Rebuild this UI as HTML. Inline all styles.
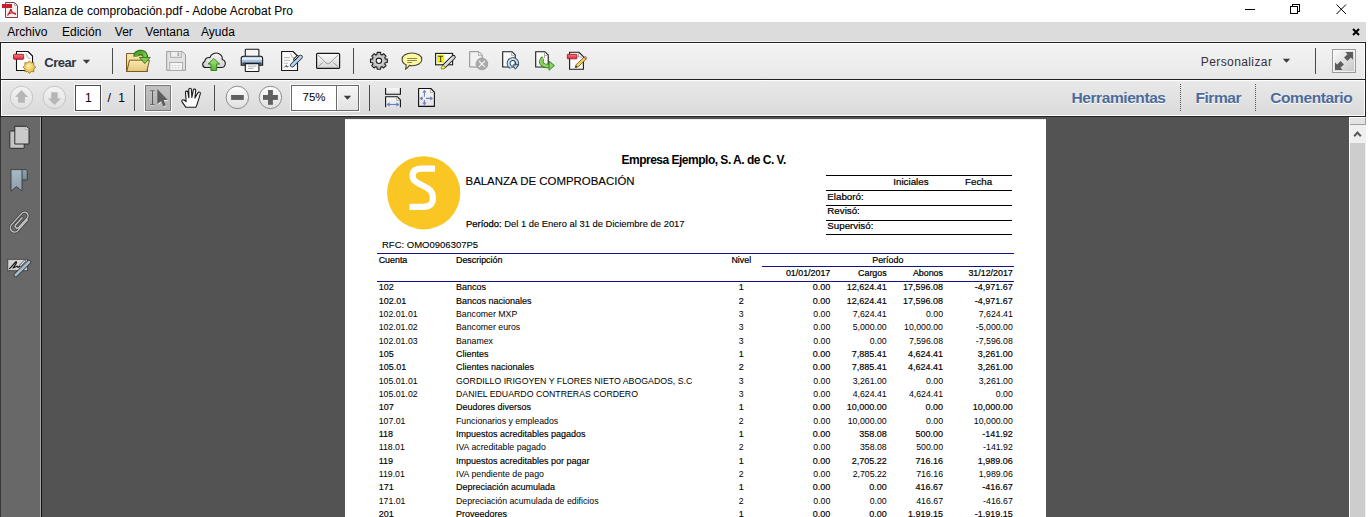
<!DOCTYPE html>
<html><head><meta charset="utf-8">
<style>
*{margin:0;padding:0;box-sizing:border-box}
html,body{width:1368px;height:517px;overflow:hidden;background:#fff;font-family:"Liberation Sans",sans-serif}
.a{position:absolute}
.t{position:absolute;white-space:nowrap;line-height:1}
svg{position:absolute;overflow:visible}
#title{left:0;top:0;width:1368px;height:22px;background:#fff}
#menu{left:0;top:22px;width:1366px;height:19px;background:#dcdcdc}
#tb1{left:0;top:42px;width:1366px;height:38px;border:1px solid #222;border-bottom:none;background:linear-gradient(#f3f3f3,#e8e8e8);box-shadow:inset 1px 1px 0 #fff, inset -1px -1px 0 #fff}
#tb2{left:0;top:79px;width:1366px;height:38px;border:1px solid #222;background:linear-gradient(#e9e9e9,#dadada);box-shadow:inset 1px 1px 0 #fff, inset -1px -1px 0 #fff}
#side{left:0;top:117px;width:42px;height:400px;background:#686868;border-right:1px solid #111;box-shadow:inset -1px 0 0 #a6a6a6, inset 1px 0 0 #383838}
#main{left:42px;top:117px;width:1307px;height:400px;background:#535353}
#sb{left:1349px;top:117px;width:17px;height:400px;background:#f0f0f0;border-left:1px solid #fff}
#page{left:345px;top:119px;width:701px;height:398px;background:#fff}
.ln{position:absolute}
.sep{position:absolute;width:1px;background:#4a4a4a}
.mi{position:absolute;font-size:12px;color:#000;line-height:1;white-space:nowrap;top:4px !important}
</style></head><body>
<!-- title bar -->
<div id="title" class="a">
  <svg style="left:0;top:0" width="22" height="22" viewBox="0 0 22 22">
    <path d="M5.5 2.5 H14.5 L17.5 5.5 V17.5 H5.5 Z" fill="#f4f0f0" stroke="#8a3a3a" stroke-width="1"/>
    <path d="M14.5 2.5 V5.5 H17.5" fill="none" stroke="#999" stroke-width="0.8"/>
    <rect x="2" y="4" width="10" height="4" fill="#c4202a"/>
    <path d="M11 9 C10 12 9 14 7.5 15.5 M11 9 C11.5 12 13 14 16 14 M8 14 C10 13 13 12.5 16 13.5" fill="none" stroke="#c4202a" stroke-width="1.3"/>
  </svg>
  <div class="t" style="left:23.5px;top:5px;font-size:12px;color:#000">Balanza de comprobación.pdf - Adobe Acrobat Pro</div>
  <div class="a" style="left:1245px;top:9px;width:10px;height:1px;background:#000"></div>
  <div class="a" style="left:1292px;top:4px;width:8px;height:8px;border:1px solid #000;background:#fff"></div>
  <div class="a" style="left:1290px;top:6px;width:8px;height:8px;border:1px solid #000;background:#fff"></div>
  <svg style="left:1336px;top:4px" width="11" height="11" viewBox="0 0 11 11"><path d="M0.5 0.5 L10 10 M10 0.5 L0.5 10" stroke="#000" stroke-width="1"/></svg>
</div>
<!-- menu bar -->
<div id="menu" class="a">
  <div class="mi" style="left:7.3px;top:5.3px">Archivo</div>
  <div class="mi" style="left:62px;top:5.3px">Edición</div>
  <div class="mi" style="left:114.8px;top:5.3px">Ver</div>
  <div class="mi" style="left:145.3px;top:5.3px">Ventana</div>
  <div class="mi" style="left:201px;top:5.3px">Ayuda</div>
  <svg style="left:1352px;top:6px" width="8" height="8" viewBox="0 0 8 8"><path d="M1 1 L7 7 M7 1 L1 7" stroke="#000" stroke-width="2"/></svg>
</div>
<div class="a" style="left:0;top:41px;width:1366px;height:1px;background:#f0f0f0"></div>
<!-- toolbar 1 -->
<div id="tb1" class="a"></div>
<!-- Crear icon -->
<svg style="left:0;top:42px" width="40" height="38" viewBox="0 42 40 38">
  <defs>
    <linearGradient id="gRed" x1="0" y1="0" x2="0" y2="1"><stop offset="0" stop-color="#ff7a80"/><stop offset="1" stop-color="#d8283a"/></linearGradient>
    <radialGradient id="gStar" cx="0.45" cy="0.4" r="0.6"><stop offset="0" stop-color="#fff2a8"/><stop offset="1" stop-color="#e0b030"/></radialGradient>
  </defs>
  <path d="M16.5 51.5 H28 L32.5 56 V70.5 H16.5 Z" fill="#fff" stroke="#111" stroke-width="1.1" stroke-linejoin="round"/>
  <path d="M25.8 53.3 C27 54.5 27 56.5 27.5 57.2 C28.5 58.3 30 58.3 30.5 58.5" fill="none" stroke="#999" stroke-width="0.9"/>
  <rect x="13.5" y="54.3" width="10.2" height="5" rx="0.8" fill="url(#gRed)" stroke="#a01824" stroke-width="0.9"/>
  <path d="M29.40 60.80 L31.20 62.86 L33.93 62.67 L33.74 65.40 L35.80 67.20 L33.74 69.00 L33.93 71.73 L31.20 71.54 L29.40 73.60 L27.60 71.54 L24.87 71.73 L25.06 69.00 L23.00 67.20 L25.06 65.40 L24.87 62.67 L27.60 62.86 Z" fill="url(#gStar)" stroke="#9a7020" stroke-width="0.8" stroke-linejoin="round"/>
</svg>
<div class="t" style="left:44.3px;top:56px;font-size:13px;letter-spacing:-0.5px;font-weight:700;color:#2e3542">Crear</div>
<svg style="left:82px;top:59px" width="9" height="6" viewBox="0 0 9 6"><path d="M0.8 0.8 H8.2 L4.5 4.8 Z" fill="#3c3c3c"/></svg>
<div class="sep" style="left:112px;top:48px;height:26px"></div>
<!-- open folder -->
<svg style="left:120px;top:44px" width="34" height="34" viewBox="120 44 34 34">
  <defs>
    <linearGradient id="gFold" x1="0" y1="0" x2="0" y2="1"><stop offset="0" stop-color="#fbe9b0"/><stop offset="1" stop-color="#e2c77e"/></linearGradient>
    <linearGradient id="gGreen" x1="0" y1="0" x2="1" y2="1"><stop offset="0" stop-color="#4a9a20"/><stop offset="1" stop-color="#8ed860"/></linearGradient>
  </defs>
  <path d="M126.5 53.5 H134 L135.5 55 H147.5 V71.5 H126.5 Z" fill="url(#gFold)" stroke="#7a5a20" stroke-width="1"/>
  <path d="M129.5 60.2 H149.4 L146.8 71.5 H126.8 Z" fill="url(#gFold)" stroke="#7a5a20" stroke-width="1" stroke-linejoin="round"/>
  <path d="M136 56.5 C135.6 53.5 138.6 52.2 141.4 52.4 C144.2 52.6 145.3 55 145.2 58" fill="none" stroke="#2f6e12" stroke-width="5.2"/>
  <path d="M136 56.5 C135.6 53.5 138.6 52.2 141.4 52.4 C144.2 52.6 145.3 55 145.2 58" fill="none" stroke="url(#gGreen)" stroke-width="3.4"/>
  <path d="M139.4 57.4 H150.2 L144.8 63.6 Z" fill="#80cc52" stroke="#2f6e12" stroke-width="0.9" stroke-linejoin="round"/>
</svg>
<!-- save (disabled) -->
<svg style="left:162px;top:46px" width="30" height="30" viewBox="162 46 30 30">
  <path d="M166.7 51.5 H182.3 L185.5 54.7 V70.3 H166.7 Z" fill="#e2e2e2" stroke="#9a9a9a" stroke-width="1"/>
  <rect x="170.6" y="51.5" width="10.6" height="5.8" fill="#eeeeee" stroke="#a6a6a6" stroke-width="0.9"/>
  <rect x="177.5" y="52.4" width="1.6" height="3.6" fill="#a6a6a6"/>
  <rect x="169.8" y="62.5" width="12.8" height="7.8" fill="#f6f6f6" stroke="#a6a6a6" stroke-width="0.9"/>
  <path d="M171.5 65.5 H181 M171.5 67.8 H181" stroke="#c8c8c8" stroke-width="0.8" stroke-dasharray="2 1"/>
</svg>
<!-- cloud upload -->
<svg style="left:199px;top:46px" width="30" height="30" viewBox="199 46 30 30">
  <defs><linearGradient id="gCloud" x1="0" y1="0" x2="0" y2="1"><stop offset="0" stop-color="#fafafa"/><stop offset="1" stop-color="#cfcfcf"/></linearGradient>
  <linearGradient id="gArr" x1="0" y1="0" x2="0" y2="1"><stop offset="0" stop-color="#a8e880"/><stop offset="1" stop-color="#58b030"/></linearGradient></defs>
  <path d="M205.5 67.5 C202 67.5 201.8 62.5 204.8 61.5 C204.8 58.5 207.5 57 209.8 57.8 C211 53.5 216 52 219 53.8 C221.5 55 222.5 57.5 222.2 59.5 C225.5 60 226 64 224.6 66 C224 67 223 67.5 222 67.5 Z" fill="url(#gCloud)" stroke="#1a1a1a" stroke-width="1.1" stroke-linejoin="round"/>
  <path d="M213.8 58.6 L219.6 64 H216.7 V70.5 H210.9 V64 H208 Z" fill="url(#gArr)" stroke="#2e7a14" stroke-width="0.9" stroke-linejoin="round"/>
</svg>
<!-- printer -->
<svg style="left:237px;top:46px" width="30" height="30" viewBox="237 46 30 30">
  <defs><linearGradient id="gPrn" x1="0" y1="0" x2="0" y2="1"><stop offset="0" stop-color="#9ab8d8"/><stop offset="0.3" stop-color="#f4f8fc"/><stop offset="0.45" stop-color="#a8c4e4"/><stop offset="0.75" stop-color="#98b4d4"/><stop offset="1" stop-color="#4a5a6a"/></linearGradient></defs>
  <rect x="245.3" y="49.3" width="13.6" height="9" rx="0.8" fill="#f4f4f4" stroke="#1a1a1a" stroke-width="1.1"/>
  <path d="M243.5 56.3 H260.7 C262 56.3 262.6 57.2 262.6 58.5 V65.2 H241.2 V58.5 C241.2 57.2 242 56.3 243.5 56.3 Z" fill="url(#gPrn)" stroke="#1a1a1a" stroke-width="1.1"/>
  <rect x="242.5" y="62.5" width="19" height="1.6" fill="#3a4a5a"/>
  <rect x="245.3" y="63.6" width="13.6" height="7.9" rx="0.6" fill="#fafafa" stroke="#1a1a1a" stroke-width="1.1"/>
  <path d="M248 66.2 H256.5 M248 68.4 H253.5" stroke="#999" stroke-width="0.8"/>
</svg>
<!-- edit doc -->
<svg style="left:277px;top:46px" width="30" height="30" viewBox="277 46 30 30">
  <path d="M281.6 51.5 H293 L297.5 56 V70.5 H281.6 Z" fill="#fafafa" stroke="#1a1a1a" stroke-width="1.1" stroke-linejoin="round"/>
  <path d="M290.7 53.3 C291.5 54.5 291.3 56 292 56.8 C293 57.6 294.5 57.5 295.5 57.5" fill="none" stroke="#999" stroke-width="0.8"/>
  <path d="M284 57.5 H290 M284 60.3 H290 M284 63.2 H288" stroke="#aaa" stroke-width="0.8"/>
  <path d="M284.3 67.5 L286.3 65.3 L286.8 67 L288.5 66.4" fill="none" stroke="#222" stroke-width="0.8"/>
  <path d="M292.2 65.2 L300.6 57" stroke="#1a2a3a" stroke-width="4.4" stroke-linecap="round"/><path d="M292.2 65.2 L300.6 57" stroke="#b8d4ee" stroke-width="2.8" stroke-linecap="round"/>
  <path d="M294.2 59.6 L297.6 56.2" stroke="#1a1a1a" stroke-width="2.4" stroke-linecap="round"/><path d="M294.2 59.6 L297.6 56.2" stroke="#fff" stroke-width="1" stroke-linecap="round"/>
</svg>
<!-- email -->
<svg style="left:313px;top:46px" width="30" height="30" viewBox="313 46 30 30">
  <defs><linearGradient id="gMail" x1="0" y1="0" x2="0" y2="1"><stop offset="0" stop-color="#fbfbfb"/><stop offset="1" stop-color="#d6d6d6"/></linearGradient></defs>
  <rect x="316.6" y="53.4" width="23" height="15" rx="1" fill="url(#gMail)" stroke="#1a1a1a" stroke-width="1.2"/>
  <path d="M318.3 55.2 L326 63 Q328 64.8 330 63 L337.9 55.2 M318.3 66.6 L322.8 62.3 M333.3 62.3 L337.9 66.6" fill="none" stroke="#8a8a8a" stroke-width="0.8"/>
</svg>
<div class="sep" style="left:353px;top:48px;height:26px"></div>
<!-- gear -->
<svg style="left:366px;top:46px" width="30" height="30" viewBox="366 46 30 30">
  <defs><radialGradient id="gGear" cx="0.5" cy="0.5" r="0.5"><stop offset="0" stop-color="#e8e8e8"/><stop offset="1" stop-color="#b0b0b0"/></radialGradient></defs>
  <g transform="translate(378.9 60.8)">
    <path id="gearp" d="M-1.95 -6.31 L-1.71 -8.43 L1.71 -8.43 L1.95 -6.31 L3.08 -5.84 L4.75 -7.17 L7.17 -4.75 L5.84 -3.08 L6.31 -1.95 L8.43 -1.71 L8.43 1.71 L6.31 1.95 L5.84 3.08 L7.17 4.75 L4.75 7.17 L3.08 5.84 L1.95 6.31 L1.71 8.43 L-1.71 8.43 L-1.95 6.31 L-3.08 5.84 L-4.75 7.17 L-7.17 4.75 L-5.84 3.08 L-6.31 1.95 L-8.43 1.71 L-8.43 -1.71 L-6.31 -1.95 L-5.84 -3.08 L-7.17 -4.75 L-4.75 -7.17 L-3.08 -5.84 Z" fill="url(#gGear)" stroke="#1a1a1a" stroke-width="1.1" stroke-linejoin="round"/>
    <circle r="2.7" fill="#fafafa" stroke="#1a1a1a" stroke-width="1.1"/>
  </g>
</svg>
<!-- bubble -->
<svg style="left:398px;top:46px" width="30" height="30" viewBox="398 46 30 30">
  <path d="M411.9 53 C417.5 53 421.8 55.6 421.8 59.4 C421.8 63.2 417.5 65.7 412 65.7 C411 65.7 410 65.6 409.2 65.4 C408.3 67 407 68.5 405.5 69.2 C405.9 68 406.3 66.5 406.2 64.8 C403.6 63.6 402.1 61.6 402.1 59.4 C402.1 55.6 406.4 53 411.9 53 Z" fill="#fcf8a4" stroke="#4a4236" stroke-width="1.1" stroke-linejoin="round"/>
  <path d="M407.2 58.5 H416.9 M407.2 60.5 H416.9 M407.2 62.5 H412" stroke="#8c8444" stroke-width="1"/>
</svg>
<!-- T pencil -->
<svg style="left:430px;top:46px" width="30" height="30" viewBox="430 46 30 30">
  <rect x="435.6" y="53.4" width="17" height="11.4" fill="#fafafa" stroke="#1a1a1a" stroke-width="1.1"/>
  <rect x="437" y="54.7" width="7.2" height="8.1" fill="#f4f000"/>
  <path d="M438.2 56.3 H443 M440.6 56.3 V61.5 M439.6 61.5 H441.6" fill="none" stroke="#3a3010" stroke-width="0.9"/>
  <path d="M444.2 66.2 L453.4 57.2" stroke="#1a1a1a" stroke-width="4.6" stroke-linecap="round"/><path d="M444.2 66.2 L453.4 57.2" stroke="#d4d4d4" stroke-width="2.8" stroke-linecap="round"/><path d="M445.5 64.2 L452 57.8" stroke="#f4f4f4" stroke-width="0.9"/>
  <path d="M441.5 69 C440.5 67.5 442 65.5 443.5 65.7 C445 66 445.5 67.5 444.5 68.3 C443.8 68.9 442.5 69.2 441.5 69 Z" fill="#f0ec90" stroke="#8a8000" stroke-width="0.9"/>
</svg>
<!-- doc X (disabled) -->
<svg style="left:465px;top:46px" width="30" height="30" viewBox="465 46 30 30">
  <path d="M469.7 51.7 H479 L482.2 54.9 V67 H469.7 Z" fill="#f2f2f2" stroke="#8c8c8c" stroke-width="1"/>
  <path d="M478.5 52.5 V55.4 H481.5" fill="none" stroke="#9a9a9a" stroke-width="0.8"/>
  <circle cx="481.9" cy="63.9" r="5.9" fill="#aaaaaa" stroke="#9a9a9a" stroke-width="0.8"/>
  <path d="M479 61 L484.8 66.8 M484.8 61 L479 66.8" stroke="#f4f4f4" stroke-width="1.1"/>
</svg>
<!-- doc refresh -->
<svg style="left:498px;top:46px" width="30" height="30" viewBox="498 46 30 30">
  <path d="M502.7 51.7 H512 L515.2 54.9 V67 H502.7 Z" fill="#fafafa" stroke="#1a1a1a" stroke-width="1.1"/>
  <path d="M511.5 52.5 V55.4 H514.5" fill="none" stroke="#999" stroke-width="0.8"/>
  <path d="M511 67.1 C508.6 66.1 508 63 509.3 60.9 C510.8 58.6 514.4 58.4 516.2 60.6 C517.6 62.4 517.3 65 515.8 66.2" fill="none" stroke="#24374a" stroke-width="3.8"/>
  <path d="M511 67.1 C508.6 66.1 508 63 509.3 60.9 C510.8 58.6 514.4 58.4 516.2 60.6 C517.6 62.4 517.3 65 515.8 66.2" fill="none" stroke="#c2e0f6" stroke-width="2.1"/>
  <path d="M512.8 65 L518.6 64.6 L515.4 69.2 Z" fill="#c2e0f6" stroke="#24374a" stroke-width="0.9" stroke-linejoin="round"/>
</svg>
<!-- doc green arrow -->
<svg style="left:531px;top:46px" width="30" height="30" viewBox="531 46 30 30">
  <path d="M535.7 51.7 H545 L548.2 54.9 V67 H535.7 Z" fill="#fafafa" stroke="#1a1a1a" stroke-width="1.1"/>
  <path d="M544.5 52.5 V58 M544.5 55.4 H547.5" fill="none" stroke="#999" stroke-width="0.8"/>
  <path d="M543.2 58.2 C540.6 59.8 540.6 63.2 543 64.8 C545 66 547.2 66.2 549.5 65.8" fill="none" stroke="#2e7416" stroke-width="4.4" stroke-linecap="butt"/>
  <path d="M543.2 58.2 C540.6 59.8 540.6 63.2 543 64.8 C545 66 547.2 66.2 549.5 65.8" fill="none" stroke="#8cd464" stroke-width="2.8"/>
  <path d="M549 61 L554.4 65.6 L549 70.2 Z" fill="#8cd464" stroke="#2e7416" stroke-width="0.9" stroke-linejoin="round"/>
</svg>
<!-- doc red pencil -->
<svg style="left:563px;top:46px" width="30" height="30" viewBox="563 46 30 30">
  <path d="M569.6 52.3 H579 L583.4 56.7 V69.3 H569.6 Z" fill="#fafafa" stroke="#1a1a1a" stroke-width="1.1"/>
  <path d="M578.5 53.3 V57 H582" fill="none" stroke="#999" stroke-width="0.8"/>
  <rect x="567.3" y="54.3" width="9.6" height="4.5" rx="0.6" fill="url(#gRed)" stroke="#a01824" stroke-width="0.9"/>
  <path d="M575.3 67.6 L576.2 64.6 L584 57.2 L586 59.2 L578.3 66.7 Z" fill="#f2d060" stroke="#7a5a18" stroke-width="0.9" stroke-linejoin="round"/>
  <path d="M584 57.2 C584.8 56.3 586.3 56.6 586.6 57.5 C586.9 58.2 586.6 58.7 586 59.2 Z" fill="#f0a0a8" stroke="#a05050" stroke-width="0.8"/>
  <path d="M575.3 67.6 L575.9 65.6 L577.3 67 Z" fill="#111"/>
</svg>
<!-- Personalizar -->
<div class="t" style="left:1200.8px;top:56px;font-size:12px;letter-spacing:0.4px;color:#352f3c">Personalizar</div>
<svg style="left:1282px;top:58px" width="9" height="6" viewBox="0 0 9 6"><path d="M0.8 0.8 H8.2 L4.5 4.8 Z" fill="#3c3c3c"/></svg>
<div class="sep" style="left:1315px;top:48px;height:26px"></div>
<!-- expand -->
<svg style="left:1328px;top:45px" width="32" height="32" viewBox="1328 45 32 32">
  <defs><linearGradient id="gExp" x1="0" y1="0" x2="1" y2="1"><stop offset="0" stop-color="#fdfdfd"/><stop offset="1" stop-color="#c4c4c4"/></linearGradient></defs>
  <rect x="1332.5" y="49.5" width="23" height="23" fill="url(#gExp)" stroke="#9a9a9a" stroke-width="1"/>
  <rect x="1333.5" y="50.5" width="21" height="21" fill="none" stroke="#fff" stroke-width="0.8" opacity="0.8"/>
  <path d="M1353 52 H1345.3 L1347.5 54.2 L1344.1 57.6 L1347.4 60.9 L1350.8 57.5 L1353 59.7 Z" fill="#5c5c5c"/>
  <path d="M1335 70 H1342.7 L1340.5 67.8 L1343.9 64.4 L1340.6 61.1 L1337.2 64.5 L1335 62.3 Z" fill="#5c5c5c"/>
</svg>

<!-- toolbar 2 -->
<div id="tb2" class="a"></div>
<!-- up/down circles (disabled) -->
<svg style="left:0;top:80px" width="70" height="36" viewBox="0 80 70 36">
  <defs><linearGradient id="gCirc" x1="0" y1="0" x2="0" y2="1"><stop offset="0" stop-color="#f4f4f4"/><stop offset="1" stop-color="#e0e0e0"/></linearGradient>
  <linearGradient id="gCirc2" x1="0" y1="0" x2="0" y2="1"><stop offset="0" stop-color="#ffffff"/><stop offset="1" stop-color="#dedede"/></linearGradient></defs>
  <circle cx="21.5" cy="97.45" r="11.2" fill="url(#gCirc)" stroke="#c4c4c4" stroke-width="1"/>
  <path d="M15 96.9 L21.5 89.9 L28 96.9 H24.9 V102.7 H18.1 V96.9 Z" fill="#b6b6b6"/>
  <circle cx="54.4" cy="97.45" r="11.2" fill="url(#gCirc)" stroke="#c4c4c4" stroke-width="1"/>
  <path d="M51.2 92.2 H57.7 V98.4 H61.1 L54.4 104.9 L48.1 98.4 H51.2 Z" fill="#b6b6b6"/>
</svg>
<!-- page number box -->
<div class="a" style="left:74px;top:84px;width:28px;height:28px;background:#fff;border:1px solid #fafafa"></div>
<div class="a" style="left:75px;top:85px;width:26px;height:26px;background:#fff;border:1px solid #4a4a4a"></div>
<div class="t" style="left:85px;top:92px;font-size:12px;color:#000">1</div>
<div class="t" style="left:107.5px;top:92px;font-size:12.5px;color:#000">/</div><div class="t" style="left:118.2px;top:92px;font-size:12px;color:#000">1</div>
<div class="sep" style="left:134px;top:85px;height:26px"></div>
<!-- select tool pressed -->
<div class="a" style="left:144px;top:84px;width:28px;height:28px;border:1px solid #fbfbfb"></div>
<div class="a" style="left:145px;top:85px;width:26px;height:26px;border:1px solid #7a7a7a;background:linear-gradient(#c2c2c2,#b2b2b2)"></div>
<svg style="left:140px;top:82px" width="34" height="32" viewBox="140 82 34 32">
  <path d="M150.2 90.9 H154.8 M152.5 90.9 V104.7 M150.2 104.7 H154.8" fill="none" stroke="#fff" stroke-width="1" transform="translate(0 0.9)" opacity="0.8"/>
  <path d="M150.2 90.9 H154.8 M152.5 90.9 V104.7 M150.2 104.7 H154.8" fill="none" stroke="#5a5a5a" stroke-width="1"/>
  <path d="M157.3 89.1 L167.8 100 H163.6 L165.8 105.2 L163.3 106.4 L161.1 101.2 L157.3 104 Z" fill="#fff" opacity="0.7" transform="translate(0.5 1)"/>
  <path d="M157.3 89.1 L167.8 100 H163.6 L165.8 105.2 L163.3 106.4 L161.1 101.2 L157.3 104 Z" fill="#5c5c5c"/>
</svg>
<!-- hand -->
<svg style="left:178px;top:84px" width="26" height="26" viewBox="178 84 26 26">
  <path transform="translate(191.2 97.6) scale(1.1 1.05) translate(-190.4 -97.2)" d="M185.5 106.3 L182.2 101.5 C181.3 100.2 182.5 98.6 184 99.5 L185.8 101 L185.2 92.2 C185.1 90.8 187.2 90.6 187.4 92 L188.3 97.4 L188.2 89.5 C188.2 88 190.5 88 190.6 89.5 L191 97 L192.3 90 C192.6 88.6 194.7 88.9 194.5 90.4 L193.8 97.6 L196.5 92.6 C197.2 91.3 199.2 92 198.7 93.4 L196.7 100.5 C196 103 195.5 104.6 194.6 106.3 Z" fill="#fcfcfc" stroke="#1a1a1a" stroke-width="1" stroke-linejoin="round"/>
</svg>
<div class="sep" style="left:214px;top:85px;height:26px"></div>
<!-- zoom out/in -->
<svg style="left:220px;top:82px" width="66" height="32" viewBox="220 82 66 32">
  <circle cx="237.35" cy="97.45" r="11.2" fill="url(#gCirc2)" stroke="#8c8c8c" stroke-width="1"/>
  <rect x="231.1" y="95" width="12.7" height="4.9" fill="#606060"/>
  <circle cx="270.45" cy="97.45" r="11.2" fill="url(#gCirc2)" stroke="#8c8c8c" stroke-width="1"/>
  <rect x="263" y="95" width="14.9" height="4.9" fill="#606060"/>
  <rect x="268" y="90" width="4.9" height="14.8" fill="#606060"/>
</svg>
<!-- zoom combo -->
<div class="a" style="left:290px;top:84px;width:70px;height:28px;border:1px solid #fafafa"></div>
<div class="a" style="left:291px;top:85px;width:68px;height:26px;border:1px solid #6a6a6a;background:#fff"></div>
<div class="a" style="left:336px;top:86px;width:1px;height:24px;background:#6a6a6a"></div>
<div class="a" style="left:337px;top:86px;width:21px;height:24px;background:linear-gradient(#f6f6f6,#e2e2e2);box-shadow:inset 1px 1px 0 #fff"></div>
<div class="t" style="left:302.5px;top:92px;font-size:11.5px;color:#000">75%</div>
<svg style="left:343px;top:95px" width="9" height="6" viewBox="0 0 9 6"><path d="M0.8 0.8 H8.2 L4.5 4.8 Z" fill="#3c3c3c"/></svg>
<div class="sep" style="left:369px;top:85px;height:26px"></div>
<!-- fit width / fit page -->
<svg style="left:378px;top:82px" width="64" height="32" viewBox="378 82 64 32">
  <defs><linearGradient id="gPg" x1="0" y1="0" x2="0" y2="1"><stop offset="0" stop-color="#f8f8f8"/><stop offset="1" stop-color="#e4e4e4"/></linearGradient></defs>
  <path d="M385.6 88 V94.3 H400.4 V88" fill="url(#gPg)" stroke="#111" stroke-width="1.1"/>
  <path d="M385.6 107.3 V96.7 H397.2 L400.4 99.9 V107.3" fill="url(#gPg)" stroke="#111" stroke-width="1.1" stroke-linejoin="round"/>
  <path d="M396.7 97.3 V100.4 H399.8" fill="none" stroke="#999" stroke-width="0.8"/>
  <path d="M387.5 104.5 H398.5" stroke="#6a82c0" stroke-width="1.2"/>
  <path d="M386.6 104.5 L389.6 102.2 V106.8 Z M399.4 104.5 L396.4 102.2 V106.8 Z" fill="#6a82c0"/>
  <path d="M418.6 88.5 H430.8 L434.4 92.1 V106.4 H418.6 Z" fill="url(#gPg)" stroke="#111" stroke-width="1.1" stroke-linejoin="round"/>
  <path d="M430.3 89.2 V92.6 H433.7" fill="none" stroke="#999" stroke-width="0.8"/>
  <path d="M424.4 91.5 V96.8 M424.4 100 V104.2 M420.8 98.4 H423 M425.9 98.4 H431.3" stroke="#6a82c0" stroke-width="1.1"/>
  <path d="M424.4 89.8 L422.2 92.6 H426.6 Z M424.4 105.4 L422.2 102.6 H426.6 Z M419.5 98.4 L422.3 96.2 V100.6 Z M433.1 98.4 L430.3 96.2 V100.6 Z" fill="#6a82c0"/>
</svg>
<!-- right tabs -->
<div class="t" style="left:1071.5px;top:90px;font-size:15.5px;letter-spacing:-0.42px;font-weight:700;color:#4b6b9b;text-shadow:0 1px 0 #fff">Herramientas</div>
<div class="a" style="left:1180px;top:84px;width:1px;height:27px;background:repeating-linear-gradient(#555 0 1px,transparent 1px 2px)"></div>
<div class="t" style="left:1195.5px;top:90px;font-size:15.5px;letter-spacing:-0.45px;font-weight:700;color:#4b6b9b;text-shadow:0 1px 0 #fff">Firmar</div>
<div class="a" style="left:1255px;top:84px;width:1px;height:27px;background:repeating-linear-gradient(#555 0 1px,transparent 1px 2px)"></div>
<div class="t" style="left:1270.3px;top:90px;font-size:15.5px;letter-spacing:-0.42px;font-weight:700;color:#4b6b9b;text-shadow:0 1px 0 #fff">Comentario</div>

<!-- left side panel -->
<div id="side" class="a"></div>
<svg style="left:0;top:117px" width="42" height="170" viewBox="0 117 42 170">
  <defs>
    <linearGradient id="gBm" x1="0" y1="0" x2="0" y2="1"><stop offset="0" stop-color="#a9bac4"/><stop offset="1" stop-color="#8a9eac"/></linearGradient>
    <linearGradient id="gBm2" x1="0" y1="0" x2="0" y2="1"><stop offset="0" stop-color="#90a8b8"/><stop offset="1" stop-color="#6e8898"/></linearGradient>
  </defs>
  <!-- pages -->
  <rect x="9.8" y="131" width="14.4" height="17.3" rx="0.8" fill="#c4c4c4" stroke="#2c2c2c" stroke-width="1"/>
  <path d="M14.8 126.3 H26.5 L29 128.8 V144 H14.8 Z" fill="#cacaca" stroke="#2c2c2c" stroke-width="1" stroke-linejoin="round"/>
  <path d="M25.8 126.8 V129.5 H28.6" fill="#eee" stroke="#999" stroke-width="0.7"/>
  <!-- bookmark -->
  <path d="M21.5 169.6 H25.2 C26.6 169.6 27.3 170.4 27.3 171.6 V180 H21.5 Z" fill="url(#gBm2)" stroke="#3a3a3a" stroke-width="0.9"/>
  <path d="M11 169.6 H22 V191.2 L16.5 186.6 L11 191.2 Z" fill="url(#gBm)" stroke="#3a3a3a" stroke-width="0.9" stroke-linejoin="round"/>
  <!-- paperclip -->
  <g transform="translate(19.6 222.2) rotate(-48)">
  <path d="M 7 4.3 H -7.5 A 4.3 4.3 0 0 1 -7.5 -4.3 H 8 A 3.6 3.6 0 0 1 8 2.9 H -4.5 A 2 2 0 0 1 -4.5 -1.1 H 5" fill="none" stroke="#333" stroke-width="2.8" stroke-linecap="round" stroke-linejoin="round" opacity="0.8"/>
  <path d="M 7 4.3 H -7.5 A 4.3 4.3 0 0 1 -7.5 -4.3 H 8 A 3.6 3.6 0 0 1 8 2.9 H -4.5 A 2 2 0 0 1 -4.5 -1.1 H 5" fill="none" stroke="#c2c2c2" stroke-width="1.4" stroke-linecap="round" stroke-linejoin="round"/>
  </g>
  <!-- signature -->
  <rect x="7.8" y="259.3" width="19.6" height="11.4" fill="#d2d2d2" stroke="#3a3a3a" stroke-width="0.8"/>
  <path d="M9.6 268.6 C11.5 267 13.5 264.5 15.2 262.5 C16.5 261 17 262 16 263.8 C15 265.5 13.5 267.2 13.3 267.8 C14.5 267.3 15.8 266.6 17 266.2 C17.5 266.2 17.3 267.3 18 267.2 C18.6 267.1 19.2 266.7 19.8 266.6" fill="none" stroke="#111" stroke-width="1.2" stroke-linecap="round"/>
  <path d="M20.6 265.3 L24.8 261" stroke="#3a3a3a" stroke-width="2.4" stroke-linecap="round"/>
  <path d="M20.6 265.3 L24.8 261" stroke="#f0f0f0" stroke-width="1.1" stroke-linecap="round"/>
  <path d="M15.8 275 L29 262" stroke="#2e2e2e" stroke-width="4.4" stroke-linecap="round"/>
  <path d="M15.8 275 L29 262" stroke="#a4bccc" stroke-width="2.8" stroke-linecap="round"/>
</svg>

<div id="main" class="a"></div>
<div id="page" class="a"></div><div class="a" style="left:345px;top:119px;width:701px;height:1px;background:#ececec"></div>
<svg style="left:380px;top:150px" width="86" height="86" viewBox="380 150 86 86">
  <circle cx="423.7" cy="192.8" r="36.6" fill="#f9c624"/>
  <path d="M435 168.6 L421.5 168.6 C415 168.6 412.6 171.5 412.6 175.5 C412.6 180.5 416.2 182.6 422.6 185.5 C429.6 188.7 432.9 191.5 432.9 198 C432.9 204 430 206.8 423 206.8 L409.5 206.8" fill="none" stroke="#fff" stroke-width="6.2"/>
</svg>
<div class="t " style="top:154.00px;font-size:12px;font-weight:700;color:#000;left:621.5px;letter-spacing:-0.5px;">Empresa Ejemplo, S. A. de C. V.</div>
<div class="t " style="top:176.00px;font-size:11.45px;font-weight:400;color:#000;left:465.5px;-webkit-text-stroke:0.1px #000;">BALANZA DE COMPROBACIÓN</div>
<div class="t " style="top:219.00px;font-size:9.42px;font-weight:400;color:#000;left:466px;-webkit-text-stroke:0.1px #000;"><span style="-webkit-text-stroke:0.25px #000">Período:</span> Del 1 de Enero al 31 de Diciembre de 2017</div>
<div class="t " style="top:240.00px;font-size:9.5px;font-weight:400;color:#000;left:382px;-webkit-text-stroke:0.1px #000;">RFC: OMO0906307P5</div>
<div class="ln" style="left:826px;top:175px;width:186px;height:1px;background:#000"></div>
<div class="ln" style="left:826px;top:190px;width:186px;height:1px;background:#000"></div>
<div class="ln" style="left:826px;top:205px;width:186px;height:1px;background:#000"></div>
<div class="ln" style="left:826px;top:220px;width:186px;height:1px;background:#000"></div>
<div class="ln" style="left:826px;top:234px;width:186px;height:1px;background:#000"></div>
<div class="t " style="top:177.00px;font-size:9.75px;font-weight:400;color:#000;left:893.3px;-webkit-text-stroke:0.22px #000;">Iniciales</div>
<div class="t " style="top:177.00px;font-size:9.75px;font-weight:400;color:#000;left:965px;-webkit-text-stroke:0.22px #000;">Fecha</div>
<div class="t " style="top:192.00px;font-size:9.75px;font-weight:400;color:#000;left:827.3px;-webkit-text-stroke:0.22px #000;">Elaboró:</div>
<div class="t " style="top:206.00px;font-size:9.75px;font-weight:400;color:#000;left:827.3px;-webkit-text-stroke:0.22px #000;">Revisó:</div>
<div class="t " style="top:221.00px;font-size:9.75px;font-weight:400;color:#000;left:827.3px;-webkit-text-stroke:0.22px #000;">Supervisó:</div>
<div class="ln" style="left:377px;top:253px;width:637px;height:1px;background:#14148a"></div>
<div class="ln" style="left:762px;top:266px;width:252px;height:1px;background:#14148a"></div>
<div class="ln" style="left:377px;top:281px;width:637px;height:1px;background:#14148a"></div>
<div class="t " style="top:256.00px;font-size:8.9px;font-weight:400;color:#000;left:378.7px;-webkit-text-stroke:0.22px #000;">Cuenta</div>
<div class="t " style="top:256.00px;font-size:8.9px;font-weight:400;color:#000;left:456px;-webkit-text-stroke:0.22px #000;">Descripción</div>
<div class="t " style="top:256.00px;font-size:8.9px;font-weight:400;color:#000;left:541.3px;width:400px;text-align:center;-webkit-text-stroke:0.22px #000;">Nivel</div>
<div class="t " style="top:256.00px;font-size:8.9px;font-weight:400;color:#000;left:687.8px;width:400px;text-align:center;-webkit-text-stroke:0.22px #000;">Período</div>
<div class="t " style="top:269.00px;font-size:8.9px;font-weight:400;color:#000;left:430.29999999999995px;width:400px;text-align:right;-webkit-text-stroke:0.22px #000;">01/01/2017</div>
<div class="t " style="top:269.00px;font-size:8.9px;font-weight:400;color:#000;left:486.70000000000005px;width:400px;text-align:right;-webkit-text-stroke:0.22px #000;">Cargos</div>
<div class="t " style="top:269.00px;font-size:8.9px;font-weight:400;color:#000;left:543px;width:400px;text-align:right;-webkit-text-stroke:0.22px #000;">Abonos</div>
<div class="t " style="top:269.00px;font-size:8.9px;font-weight:400;color:#000;left:612.8px;width:400px;text-align:right;-webkit-text-stroke:0.22px #000;">31/12/2017</div>
<div class="t " style="top:283.00px;font-size:9.0px;font-weight:400;color:#000;left:378.7px;-webkit-text-stroke:0.16px #000;">102</div>
<div class="t " style="top:283.00px;font-size:9.0px;font-weight:400;color:#000;left:456px;-webkit-text-stroke:0.16px #000;">Bancos</div>
<div class="t " style="top:283.00px;font-size:9.0px;font-weight:400;color:#000;left:541.3px;width:400px;text-align:center;-webkit-text-stroke:0.16px #000;">1</div>
<div class="t " style="top:283.00px;font-size:9.0px;font-weight:400;color:#000;left:430.29999999999995px;width:400px;text-align:right;-webkit-text-stroke:0.16px #000;">0.00</div>
<div class="t " style="top:283.00px;font-size:9.0px;font-weight:400;color:#000;left:486.70000000000005px;width:400px;text-align:right;-webkit-text-stroke:0.16px #000;">12,624.41</div>
<div class="t " style="top:283.00px;font-size:9.0px;font-weight:400;color:#000;left:543px;width:400px;text-align:right;-webkit-text-stroke:0.16px #000;">17,596.08</div>
<div class="t " style="top:283.00px;font-size:9.0px;font-weight:400;color:#000;left:612.8px;width:400px;text-align:right;-webkit-text-stroke:0.16px #000;">-4,971.67</div>
<div class="t " style="top:297.00px;font-size:9.0px;font-weight:400;color:#000;left:378.7px;-webkit-text-stroke:0.16px #000;">102.01</div>
<div class="t " style="top:297.00px;font-size:9.0px;font-weight:400;color:#000;left:456px;-webkit-text-stroke:0.16px #000;">Bancos nacionales</div>
<div class="t " style="top:297.00px;font-size:9.0px;font-weight:400;color:#000;left:541.3px;width:400px;text-align:center;-webkit-text-stroke:0.16px #000;">2</div>
<div class="t " style="top:297.00px;font-size:9.0px;font-weight:400;color:#000;left:430.29999999999995px;width:400px;text-align:right;-webkit-text-stroke:0.16px #000;">0.00</div>
<div class="t " style="top:297.00px;font-size:9.0px;font-weight:400;color:#000;left:486.70000000000005px;width:400px;text-align:right;-webkit-text-stroke:0.16px #000;">12,624.41</div>
<div class="t " style="top:297.00px;font-size:9.0px;font-weight:400;color:#000;left:543px;width:400px;text-align:right;-webkit-text-stroke:0.16px #000;">17,596.08</div>
<div class="t " style="top:297.00px;font-size:9.0px;font-weight:400;color:#000;left:612.8px;width:400px;text-align:right;-webkit-text-stroke:0.16px #000;">-4,971.67</div>
<div class="t " style="top:310.00px;font-size:8.75px;font-weight:400;color:#000;left:378.7px;">102.01.01</div>
<div class="t " style="top:310.00px;font-size:8.75px;font-weight:400;color:#000;left:456px;">Bancomer MXP</div>
<div class="t " style="top:310.00px;font-size:8.75px;font-weight:400;color:#000;left:541.3px;width:400px;text-align:center;">3</div>
<div class="t " style="top:310.00px;font-size:8.75px;font-weight:400;color:#000;left:430.29999999999995px;width:400px;text-align:right;">0.00</div>
<div class="t " style="top:310.00px;font-size:8.75px;font-weight:400;color:#000;left:486.70000000000005px;width:400px;text-align:right;">7,624.41</div>
<div class="t " style="top:310.00px;font-size:8.75px;font-weight:400;color:#000;left:543px;width:400px;text-align:right;">0.00</div>
<div class="t " style="top:310.00px;font-size:8.75px;font-weight:400;color:#000;left:612.8px;width:400px;text-align:right;">7,624.41</div>
<div class="t " style="top:323.00px;font-size:8.75px;font-weight:400;color:#000;left:378.7px;">102.01.02</div>
<div class="t " style="top:323.00px;font-size:8.75px;font-weight:400;color:#000;left:456px;">Bancomer euros</div>
<div class="t " style="top:323.00px;font-size:8.75px;font-weight:400;color:#000;left:541.3px;width:400px;text-align:center;">3</div>
<div class="t " style="top:323.00px;font-size:8.75px;font-weight:400;color:#000;left:430.29999999999995px;width:400px;text-align:right;">0.00</div>
<div class="t " style="top:323.00px;font-size:8.75px;font-weight:400;color:#000;left:486.70000000000005px;width:400px;text-align:right;">5,000.00</div>
<div class="t " style="top:323.00px;font-size:8.75px;font-weight:400;color:#000;left:543px;width:400px;text-align:right;">10,000.00</div>
<div class="t " style="top:323.00px;font-size:8.75px;font-weight:400;color:#000;left:612.8px;width:400px;text-align:right;">-5,000.00</div>
<div class="t " style="top:337.00px;font-size:8.75px;font-weight:400;color:#000;left:378.7px;">102.01.03</div>
<div class="t " style="top:337.00px;font-size:8.75px;font-weight:400;color:#000;left:456px;">Banamex</div>
<div class="t " style="top:337.00px;font-size:8.75px;font-weight:400;color:#000;left:541.3px;width:400px;text-align:center;">3</div>
<div class="t " style="top:337.00px;font-size:8.75px;font-weight:400;color:#000;left:430.29999999999995px;width:400px;text-align:right;">0.00</div>
<div class="t " style="top:337.00px;font-size:8.75px;font-weight:400;color:#000;left:486.70000000000005px;width:400px;text-align:right;">0.00</div>
<div class="t " style="top:337.00px;font-size:8.75px;font-weight:400;color:#000;left:543px;width:400px;text-align:right;">7,596.08</div>
<div class="t " style="top:337.00px;font-size:8.75px;font-weight:400;color:#000;left:612.8px;width:400px;text-align:right;">-7,596.08</div>
<div class="t " style="top:350.00px;font-size:9.0px;font-weight:400;color:#000;left:378.7px;-webkit-text-stroke:0.16px #000;">105</div>
<div class="t " style="top:350.00px;font-size:9.0px;font-weight:400;color:#000;left:456px;-webkit-text-stroke:0.16px #000;">Clientes</div>
<div class="t " style="top:350.00px;font-size:9.0px;font-weight:400;color:#000;left:541.3px;width:400px;text-align:center;-webkit-text-stroke:0.16px #000;">1</div>
<div class="t " style="top:350.00px;font-size:9.0px;font-weight:400;color:#000;left:430.29999999999995px;width:400px;text-align:right;-webkit-text-stroke:0.16px #000;">0.00</div>
<div class="t " style="top:350.00px;font-size:9.0px;font-weight:400;color:#000;left:486.70000000000005px;width:400px;text-align:right;-webkit-text-stroke:0.16px #000;">7,885.41</div>
<div class="t " style="top:350.00px;font-size:9.0px;font-weight:400;color:#000;left:543px;width:400px;text-align:right;-webkit-text-stroke:0.16px #000;">4,624.41</div>
<div class="t " style="top:350.00px;font-size:9.0px;font-weight:400;color:#000;left:612.8px;width:400px;text-align:right;-webkit-text-stroke:0.16px #000;">3,261.00</div>
<div class="t " style="top:363.00px;font-size:9.0px;font-weight:400;color:#000;left:378.7px;-webkit-text-stroke:0.16px #000;">105.01</div>
<div class="t " style="top:363.00px;font-size:9.0px;font-weight:400;color:#000;left:456px;-webkit-text-stroke:0.16px #000;">Clientes nacionales</div>
<div class="t " style="top:363.00px;font-size:9.0px;font-weight:400;color:#000;left:541.3px;width:400px;text-align:center;-webkit-text-stroke:0.16px #000;">2</div>
<div class="t " style="top:363.00px;font-size:9.0px;font-weight:400;color:#000;left:430.29999999999995px;width:400px;text-align:right;-webkit-text-stroke:0.16px #000;">0.00</div>
<div class="t " style="top:363.00px;font-size:9.0px;font-weight:400;color:#000;left:486.70000000000005px;width:400px;text-align:right;-webkit-text-stroke:0.16px #000;">7,885.41</div>
<div class="t " style="top:363.00px;font-size:9.0px;font-weight:400;color:#000;left:543px;width:400px;text-align:right;-webkit-text-stroke:0.16px #000;">4,624.41</div>
<div class="t " style="top:363.00px;font-size:9.0px;font-weight:400;color:#000;left:612.8px;width:400px;text-align:right;-webkit-text-stroke:0.16px #000;">3,261.00</div>
<div class="t " style="top:377.00px;font-size:8.75px;font-weight:400;color:#000;left:378.7px;">105.01.01</div>
<div class="t " style="top:377.00px;font-size:8.75px;font-weight:400;color:#000;left:456px;">GORDILLO IRIGOYEN Y FLORES NIETO ABOGADOS, S.C</div>
<div class="t " style="top:377.00px;font-size:8.75px;font-weight:400;color:#000;left:541.3px;width:400px;text-align:center;">3</div>
<div class="t " style="top:377.00px;font-size:8.75px;font-weight:400;color:#000;left:430.29999999999995px;width:400px;text-align:right;">0.00</div>
<div class="t " style="top:377.00px;font-size:8.75px;font-weight:400;color:#000;left:486.70000000000005px;width:400px;text-align:right;">3,261.00</div>
<div class="t " style="top:377.00px;font-size:8.75px;font-weight:400;color:#000;left:543px;width:400px;text-align:right;">0.00</div>
<div class="t " style="top:377.00px;font-size:8.75px;font-weight:400;color:#000;left:612.8px;width:400px;text-align:right;">3,261.00</div>
<div class="t " style="top:390.00px;font-size:8.75px;font-weight:400;color:#000;left:378.7px;">105.01.02</div>
<div class="t " style="top:390.00px;font-size:8.75px;font-weight:400;color:#000;left:456px;">DANIEL EDUARDO CONTRERAS CORDERO</div>
<div class="t " style="top:390.00px;font-size:8.75px;font-weight:400;color:#000;left:541.3px;width:400px;text-align:center;">3</div>
<div class="t " style="top:390.00px;font-size:8.75px;font-weight:400;color:#000;left:430.29999999999995px;width:400px;text-align:right;">0.00</div>
<div class="t " style="top:390.00px;font-size:8.75px;font-weight:400;color:#000;left:486.70000000000005px;width:400px;text-align:right;">4,624.41</div>
<div class="t " style="top:390.00px;font-size:8.75px;font-weight:400;color:#000;left:543px;width:400px;text-align:right;">4,624.41</div>
<div class="t " style="top:390.00px;font-size:8.75px;font-weight:400;color:#000;left:612.8px;width:400px;text-align:right;">0.00</div>
<div class="t " style="top:403.00px;font-size:9.0px;font-weight:400;color:#000;left:378.7px;-webkit-text-stroke:0.16px #000;">107</div>
<div class="t " style="top:403.00px;font-size:9.0px;font-weight:400;color:#000;left:456px;-webkit-text-stroke:0.16px #000;">Deudores diversos</div>
<div class="t " style="top:403.00px;font-size:9.0px;font-weight:400;color:#000;left:541.3px;width:400px;text-align:center;-webkit-text-stroke:0.16px #000;">1</div>
<div class="t " style="top:403.00px;font-size:9.0px;font-weight:400;color:#000;left:430.29999999999995px;width:400px;text-align:right;-webkit-text-stroke:0.16px #000;">0.00</div>
<div class="t " style="top:403.00px;font-size:9.0px;font-weight:400;color:#000;left:486.70000000000005px;width:400px;text-align:right;-webkit-text-stroke:0.16px #000;">10,000.00</div>
<div class="t " style="top:403.00px;font-size:9.0px;font-weight:400;color:#000;left:543px;width:400px;text-align:right;-webkit-text-stroke:0.16px #000;">0.00</div>
<div class="t " style="top:403.00px;font-size:9.0px;font-weight:400;color:#000;left:612.8px;width:400px;text-align:right;-webkit-text-stroke:0.16px #000;">10,000.00</div>
<div class="t " style="top:417.00px;font-size:8.75px;font-weight:400;color:#000;left:378.7px;">107.01</div>
<div class="t " style="top:417.00px;font-size:8.75px;font-weight:400;color:#000;left:456px;">Funcionarios y empleados</div>
<div class="t " style="top:417.00px;font-size:8.75px;font-weight:400;color:#000;left:541.3px;width:400px;text-align:center;">2</div>
<div class="t " style="top:417.00px;font-size:8.75px;font-weight:400;color:#000;left:430.29999999999995px;width:400px;text-align:right;">0.00</div>
<div class="t " style="top:417.00px;font-size:8.75px;font-weight:400;color:#000;left:486.70000000000005px;width:400px;text-align:right;">10,000.00</div>
<div class="t " style="top:417.00px;font-size:8.75px;font-weight:400;color:#000;left:543px;width:400px;text-align:right;">0.00</div>
<div class="t " style="top:417.00px;font-size:8.75px;font-weight:400;color:#000;left:612.8px;width:400px;text-align:right;">10,000.00</div>
<div class="t " style="top:430.00px;font-size:9.0px;font-weight:400;color:#000;left:378.7px;-webkit-text-stroke:0.16px #000;">118</div>
<div class="t " style="top:430.00px;font-size:9.0px;font-weight:400;color:#000;left:456px;-webkit-text-stroke:0.16px #000;">Impuestos acreditables pagados</div>
<div class="t " style="top:430.00px;font-size:9.0px;font-weight:400;color:#000;left:541.3px;width:400px;text-align:center;-webkit-text-stroke:0.16px #000;">1</div>
<div class="t " style="top:430.00px;font-size:9.0px;font-weight:400;color:#000;left:430.29999999999995px;width:400px;text-align:right;-webkit-text-stroke:0.16px #000;">0.00</div>
<div class="t " style="top:430.00px;font-size:9.0px;font-weight:400;color:#000;left:486.70000000000005px;width:400px;text-align:right;-webkit-text-stroke:0.16px #000;">358.08</div>
<div class="t " style="top:430.00px;font-size:9.0px;font-weight:400;color:#000;left:543px;width:400px;text-align:right;-webkit-text-stroke:0.16px #000;">500.00</div>
<div class="t " style="top:430.00px;font-size:9.0px;font-weight:400;color:#000;left:612.8px;width:400px;text-align:right;-webkit-text-stroke:0.16px #000;">-141.92</div>
<div class="t " style="top:443.00px;font-size:8.75px;font-weight:400;color:#000;left:378.7px;">118.01</div>
<div class="t " style="top:443.00px;font-size:8.75px;font-weight:400;color:#000;left:456px;">IVA acreditable pagado</div>
<div class="t " style="top:443.00px;font-size:8.75px;font-weight:400;color:#000;left:541.3px;width:400px;text-align:center;">2</div>
<div class="t " style="top:443.00px;font-size:8.75px;font-weight:400;color:#000;left:430.29999999999995px;width:400px;text-align:right;">0.00</div>
<div class="t " style="top:443.00px;font-size:8.75px;font-weight:400;color:#000;left:486.70000000000005px;width:400px;text-align:right;">358.08</div>
<div class="t " style="top:443.00px;font-size:8.75px;font-weight:400;color:#000;left:543px;width:400px;text-align:right;">500.00</div>
<div class="t " style="top:443.00px;font-size:8.75px;font-weight:400;color:#000;left:612.8px;width:400px;text-align:right;">-141.92</div>
<div class="t " style="top:457.00px;font-size:9.0px;font-weight:400;color:#000;left:378.7px;-webkit-text-stroke:0.16px #000;">119</div>
<div class="t " style="top:457.00px;font-size:9.0px;font-weight:400;color:#000;left:456px;-webkit-text-stroke:0.16px #000;">Impuestos acreditables por pagar</div>
<div class="t " style="top:457.00px;font-size:9.0px;font-weight:400;color:#000;left:541.3px;width:400px;text-align:center;-webkit-text-stroke:0.16px #000;">1</div>
<div class="t " style="top:457.00px;font-size:9.0px;font-weight:400;color:#000;left:430.29999999999995px;width:400px;text-align:right;-webkit-text-stroke:0.16px #000;">0.00</div>
<div class="t " style="top:457.00px;font-size:9.0px;font-weight:400;color:#000;left:486.70000000000005px;width:400px;text-align:right;-webkit-text-stroke:0.16px #000;">2,705.22</div>
<div class="t " style="top:457.00px;font-size:9.0px;font-weight:400;color:#000;left:543px;width:400px;text-align:right;-webkit-text-stroke:0.16px #000;">716.16</div>
<div class="t " style="top:457.00px;font-size:9.0px;font-weight:400;color:#000;left:612.8px;width:400px;text-align:right;-webkit-text-stroke:0.16px #000;">1,989.06</div>
<div class="t " style="top:470.00px;font-size:8.75px;font-weight:400;color:#000;left:378.7px;">119.01</div>
<div class="t " style="top:470.00px;font-size:8.75px;font-weight:400;color:#000;left:456px;">IVA pendiente de pago</div>
<div class="t " style="top:470.00px;font-size:8.75px;font-weight:400;color:#000;left:541.3px;width:400px;text-align:center;">2</div>
<div class="t " style="top:470.00px;font-size:8.75px;font-weight:400;color:#000;left:430.29999999999995px;width:400px;text-align:right;">0.00</div>
<div class="t " style="top:470.00px;font-size:8.75px;font-weight:400;color:#000;left:486.70000000000005px;width:400px;text-align:right;">2,705.22</div>
<div class="t " style="top:470.00px;font-size:8.75px;font-weight:400;color:#000;left:543px;width:400px;text-align:right;">716.16</div>
<div class="t " style="top:470.00px;font-size:8.75px;font-weight:400;color:#000;left:612.8px;width:400px;text-align:right;">1,989.06</div>
<div class="t " style="top:483.00px;font-size:9.0px;font-weight:400;color:#000;left:378.7px;-webkit-text-stroke:0.16px #000;">171</div>
<div class="t " style="top:483.00px;font-size:9.0px;font-weight:400;color:#000;left:456px;-webkit-text-stroke:0.16px #000;">Depreciación acumulada</div>
<div class="t " style="top:483.00px;font-size:9.0px;font-weight:400;color:#000;left:541.3px;width:400px;text-align:center;-webkit-text-stroke:0.16px #000;">1</div>
<div class="t " style="top:483.00px;font-size:9.0px;font-weight:400;color:#000;left:430.29999999999995px;width:400px;text-align:right;-webkit-text-stroke:0.16px #000;">0.00</div>
<div class="t " style="top:483.00px;font-size:9.0px;font-weight:400;color:#000;left:486.70000000000005px;width:400px;text-align:right;-webkit-text-stroke:0.16px #000;">0.00</div>
<div class="t " style="top:483.00px;font-size:9.0px;font-weight:400;color:#000;left:543px;width:400px;text-align:right;-webkit-text-stroke:0.16px #000;">416.67</div>
<div class="t " style="top:483.00px;font-size:9.0px;font-weight:400;color:#000;left:612.8px;width:400px;text-align:right;-webkit-text-stroke:0.16px #000;">-416.67</div>
<div class="t " style="top:497.00px;font-size:8.75px;font-weight:400;color:#000;left:378.7px;">171.01</div>
<div class="t " style="top:497.00px;font-size:8.75px;font-weight:400;color:#000;left:456px;">Depreciación acumulada de edificios</div>
<div class="t " style="top:497.00px;font-size:8.75px;font-weight:400;color:#000;left:541.3px;width:400px;text-align:center;">2</div>
<div class="t " style="top:497.00px;font-size:8.75px;font-weight:400;color:#000;left:430.29999999999995px;width:400px;text-align:right;">0.00</div>
<div class="t " style="top:497.00px;font-size:8.75px;font-weight:400;color:#000;left:486.70000000000005px;width:400px;text-align:right;">0.00</div>
<div class="t " style="top:497.00px;font-size:8.75px;font-weight:400;color:#000;left:543px;width:400px;text-align:right;">416.67</div>
<div class="t " style="top:497.00px;font-size:8.75px;font-weight:400;color:#000;left:612.8px;width:400px;text-align:right;">-416.67</div>
<div class="t " style="top:510.00px;font-size:9.0px;font-weight:400;color:#000;left:378.7px;-webkit-text-stroke:0.16px #000;">201</div>
<div class="t " style="top:510.00px;font-size:9.0px;font-weight:400;color:#000;left:456px;-webkit-text-stroke:0.16px #000;">Proveedores</div>
<div class="t " style="top:510.00px;font-size:9.0px;font-weight:400;color:#000;left:541.3px;width:400px;text-align:center;-webkit-text-stroke:0.16px #000;">1</div>
<div class="t " style="top:510.00px;font-size:9.0px;font-weight:400;color:#000;left:430.29999999999995px;width:400px;text-align:right;-webkit-text-stroke:0.16px #000;">0.00</div>
<div class="t " style="top:510.00px;font-size:9.0px;font-weight:400;color:#000;left:486.70000000000005px;width:400px;text-align:right;-webkit-text-stroke:0.16px #000;">0.00</div>
<div class="t " style="top:510.00px;font-size:9.0px;font-weight:400;color:#000;left:543px;width:400px;text-align:right;-webkit-text-stroke:0.16px #000;">1,919.15</div>
<div class="t " style="top:510.00px;font-size:9.0px;font-weight:400;color:#000;left:612.8px;width:400px;text-align:right;-webkit-text-stroke:0.16px #000;">-1,919.15</div>
<!-- scrollbar -->
<div id="sb" class="a"></div>
<div class="a" style="left:1350px;top:117px;width:16px;height:8px;background:#e3e3e3;border-right:1px solid #a0a0a0;border-bottom:1px solid #a0a0a0;border-top:1px solid #fff"></div>
<svg style="left:1350px;top:125px" width="15" height="18" viewBox="0 0 15 18"><path d="M4.2 11.2 L7.5 7.6 L10.8 11.2" fill="none" stroke="#5a5a5a" stroke-width="2.1"/></svg>
<div class="a" style="left:1350px;top:143px;width:15px;height:374px;background:#cdcdcd"></div>
</body></html>
